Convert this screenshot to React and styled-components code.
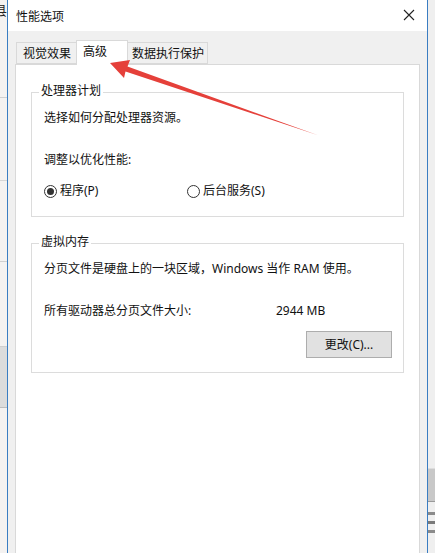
import React from "react";
import styled, { createGlobalStyle } from "styled-components";

const Global = createGlobalStyle`
  html, body { margin: 0; padding: 0; }
  body {
    background: #f2f0ee;
    font-family: "Noto Sans", "Noto Sans CJK SC", sans-serif;
    font-size: 12px;
    color: #111;
    -webkit-font-smoothing: antialiased;
  }
`;

const Screen = styled.div`
  position: relative;
  width: 435px;
  height: 553px;
  overflow: hidden;
  display: flex;
`;

const Strip = styled.div`
  width: ${(p) => p.$w}px;
  flex: none;
  display: flex;
  flex-direction: column;
  overflow: hidden;
  background: ${(p) => p.$bg};
`;

const Seg = styled.div`
  height: ${(p) => p.$h}px;
  flex: none;
  background: ${(p) => p.$bg || "transparent"};
  border-bottom: ${(p) => (p.$line ? `1px solid ${p.$line}` : "none")};
`;

const Glyph = styled.div`
  height: 24px;
  display: flex;
  justify-content: flex-end;
  overflow: hidden;
  font-family: "Noto Sans CJK SC", sans-serif;
  font-size: 13px;
  line-height: 20px;
  color: #222;
`;

const Dialog = styled.div`
  width: 419px;
  flex: none;
  border-left: 1px solid #3a7dc2;
  border-right: 1px solid #3a7dc2;
  background: #f0f0f0;
  display: flex;
  flex-direction: column;
`;

const TitleBar = styled.div`
  height: 31px;
  background: #ffffff;
  display: flex;
  align-items: center;
  justify-content: space-between;
  padding: 0 12px 0 8px;
  flex: none;
`;

const Title = styled.span`
  font-family: "Noto Sans CJK SC", sans-serif;
  font-size: 12px;
  line-height: 16px;
  color: #111;
  margin-top: 1px;
`;

const CloseBtn = styled.div`
  width: 12px;
  height: 12px;
  display: flex;
  margin-top: -1px;
`;

const Body = styled.div`
  flex: 1;
  display: flex;
  flex-direction: column;
  padding: 9px 7px 0 7px;
`;

const TabRow = styled.div`
  display: flex;
  align-items: flex-end;
  margin-left: 1px;
  height: 24px;
  position: relative;
  z-index: 1;
`;

const Tab = styled.div`
  box-sizing: border-box;
  width: ${(p) => p.$w}px;
  height: ${(p) => (p.$active ? 25 : 22)}px;
  margin-left: ${(p) => (p.$first ? 0 : -1)}px;
  margin-bottom: ${(p) => (p.$active ? -1 : 0)}px;
  padding-left: ${(p) => p.$pad}px;
  background: ${(p) => (p.$active ? "#ffffff" : "#f0f0f0")};
  border: 1px solid #d9d9d9;
  border-bottom: ${(p) => (p.$active ? "none" : "1px solid #d9d9d9")};
  font-family: "Noto Sans CJK SC", sans-serif;
  line-height: ${(p) => (p.$active ? 20 : 19)}px;
  position: relative;
  z-index: ${(p) => (p.$active ? 2 : 1)};
`;

const Panel = styled.div`
  flex: 1;
  background: #ffffff;
  border: 1px solid #d9d9d9;
  border-bottom: none;
  padding: 0 15px;
  display: flex;
  flex-direction: column;
`;

const Group = styled.div`
  position: relative;
  margin-top: ${(p) => p.$top}px;
  border: 1px solid #dcdcdc;
  padding: 17px 11px ${(p) => p.$bottom}px 12px;
  display: flex;
  flex-direction: column;
`;

const Legend = styled.span`
  position: absolute;
  left: 7px;
  top: -11px;
  padding: 0 2px;
  background: #ffffff;
  font-family: "Noto Sans CJK SC", sans-serif;
  line-height: 16px;
`;

const Line = styled.div`
  line-height: 16px;
  margin-top: ${(p) => p.$top || 0}px;
  white-space: nowrap;
`;

const RadioRow = styled.div`
  display: flex;
  align-items: center;
  height: 16px;
  margin-top: 15px;
`;

const RadioItem = styled.label`
  display: flex;
  align-items: center;
  width: ${(p) => p.$w}px;
  gap: 3px;
  line-height: 16px;
`;

const RadioCircle = styled.span`
  box-sizing: border-box;
  width: 13px;
  height: 13px;
  border-radius: 50%;
  border: 1px solid #333;
  background: #fff;
  display: flex;
  align-items: center;
  justify-content: center;
  &::after {
    content: "";
    width: 7px;
    height: 7px;
    border-radius: 50%;
    background: ${(p) => (p.$checked ? "#333" : "transparent")};
  }
`;

const InfoRow = styled.div`
  display: flex;
  line-height: 16px;
  margin-top: 26px;
`;

const InfoLabel = styled.span`
  width: 232px;
`;

const ButtonRow = styled.div`
  display: flex;
  justify-content: flex-end;
  margin-top: 12px;
`;

const Button = styled.div`
  box-sizing: border-box;
  width: 86px;
  height: 27px;
  background: #e1e1e1;
  border: 1px solid #adadad;
  display: flex;
  align-items: center;
  justify-content: center;
  line-height: 16px;
`;

const ArrowLayer = styled.svg`
  position: absolute;
  left: 0;
  top: 0;
  pointer-events: none;
  z-index: 5;
`;

export default function App() {
  return (
    <>
      <Global />
      <Screen>
        <Strip $w={7} $bg="#f4f2f1">
          <Glyph>县</Glyph>
          <Seg $h={73} $line="#d0d0d0" />
          <Seg $h={82} $line="#d6d6d6" />
          <Seg $h={80} $line="#d0d0d0" />
          <Seg $h={84} $line="#cfcfcf" />
          <Seg $h={60} $bg="#dcdcdc" $line="#bdbdbd" />
          <Seg $h={140} />
        </Strip>
        <Dialog>
          <TitleBar>
            <Title>性能选项</Title>
            <CloseBtn>
              <svg width="12" height="12" viewBox="0 0 12 12">
                <path d="M1 1 L11 11 M11 1 L1 11" stroke="#222" strokeWidth="1.1" fill="none" />
              </svg>
            </CloseBtn>
          </TitleBar>
          <Body>
            <TabRow>
              <Tab $first $w={61} $pad={6}>视觉效果</Tab>
              <Tab $active $w={52} $pad={6}>高级</Tab>
              <Tab $w={81} $pad={4}>数据执行保护</Tab>
            </TabRow>
            <Panel>
              <Group $top={27} $bottom={17}>
                <Legend>处理器计划</Legend>
                <Line>选择如何分配处理器资源。</Line>
                <Line $top={26}>调整以优化性能:</Line>
                <RadioRow>
                  <RadioItem $w={143}>
                    <RadioCircle $checked />
                    程序(P)
                  </RadioItem>
                  <RadioItem>
                    <RadioCircle />
                    后台服务(S)
                  </RadioItem>
                </RadioRow>
              </Group>
              <Group $top={26} $bottom={14}>
                <Legend>虚拟内存</Legend>
                <Line>分页文件是硬盘上的一块区域，Windows 当作 RAM 使用。</Line>
                <InfoRow>
                  <InfoLabel>所有驱动器总分页文件大小:</InfoLabel>
                  <span>2944 MB</span>
                </InfoRow>
                <ButtonRow>
                  <Button>更改(C)...</Button>
                </ButtonRow>
              </Group>
            </Panel>
          </Body>
        </Dialog>
        <Strip $w={7} $bg="#efefef">
          <Seg $h={468} $line="#dddddd" />
          <Seg $h={32} $bg="#c8c8c8" $line="#9a9a9a" />
          <Seg $h={10} />
          <Seg $h={3} $bg="#8a8a8a" />
          <Seg $h={6} />
          <Seg $h={3} $bg="#7a7a7a" />
          <Seg $h={6} />
          <Seg $h={3} $bg="#8a8a8a" />
        </Strip>
        <ArrowLayer width="435" height="553" viewBox="0 0 435 553">
          <polygon
            points="110,63 130,60 127.5,66.5 318,135.3 125.5,71.5 124,78"
            fill="#e5403a"
          />
        </ArrowLayer>
      </Screen>
    </>
  );
}
